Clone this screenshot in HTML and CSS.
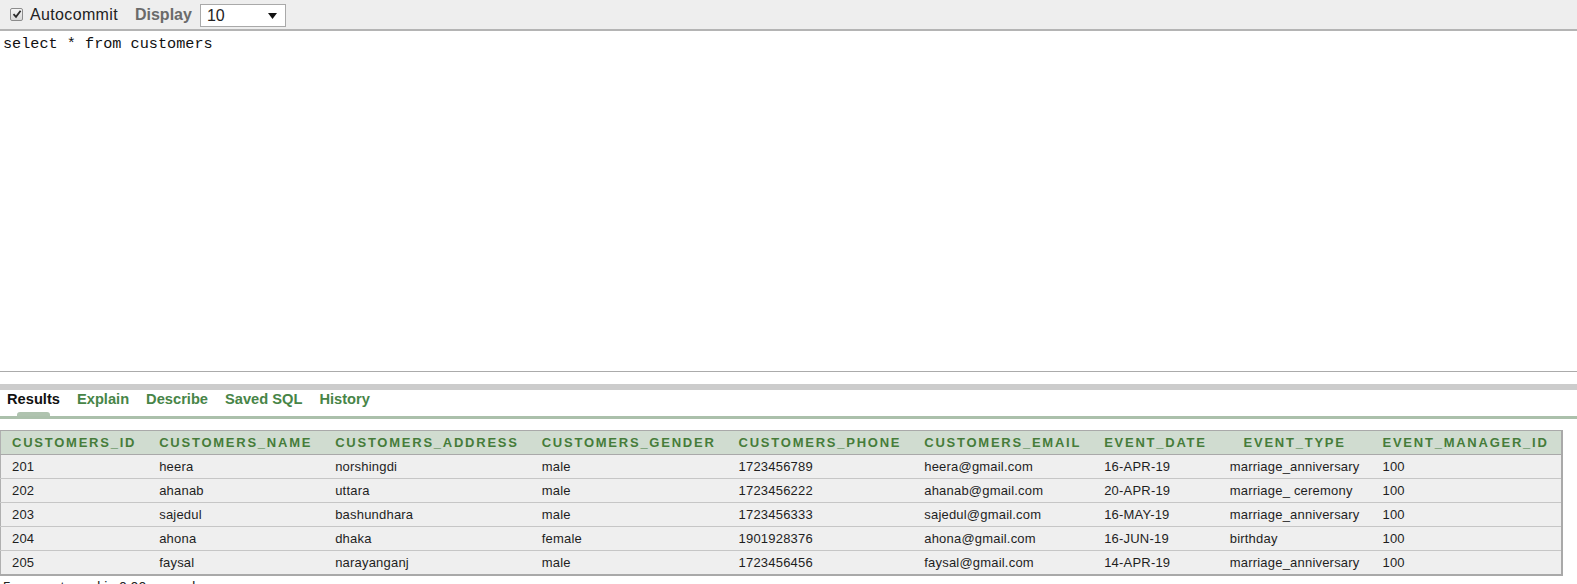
FILE: index.html
```html
<!DOCTYPE html>
<html>
<head>
<meta charset="utf-8">
<title>SQL Commands</title>
<link rel="stylesheet" href="styles.css">
</head>
<body>
<div class="toolbar">
  <span class="check">
    <svg width="10" height="10" viewBox="0 0 10 10"><path d="M1.5 5.2 L4 7.8 L8.6 1.8" fill="none" stroke="#2a2a2a" stroke-width="1.8"/></svg>
  </span>
  <span class="autocommit">Autocommit</span>
  <span class="display-label">Display</span>
  <span class="select">
    <span class="select-value">10</span>
    <svg class="select-arrow" width="9" height="6" viewBox="0 0 9 6"><path d="M0 0 H9 L4.5 6 Z" fill="#111"/></svg>
  </span>
</div>
<div class="editor">select * from customers</div>
<div class="spacer"></div>
<div class="divider"></div>
<div class="tabs">
  <span class="tab active">Results</span>
  <span class="tab">Explain</span>
  <span class="tab">Describe</span>
  <span class="tab">Saved SQL</span>
  <span class="tab">History</span>
</div>
<div class="results">
  <table class="grid">
    <thead>
      <tr>
        <th>CUSTOMERS_ID</th>
        <th>CUSTOMERS_NAME</th>
        <th>CUSTOMERS_ADDRESS</th>
        <th>CUSTOMERS_GENDER</th>
        <th>CUSTOMERS_PHONE</th>
        <th>CUSTOMERS_EMAIL</th>
        <th>EVENT_DATE</th>
        <th>EVENT_TYPE</th>
        <th>EVENT_MANAGER_ID</th>
      </tr>
    </thead>
    <tbody>
      <tr><td>201</td><td>heera</td><td>norshingdi</td><td>male</td><td>1723456789</td><td>heera@gmail.com</td><td>16-APR-19</td><td>marriage_anniversary</td><td>100</td></tr>
      <tr><td>202</td><td>ahanab</td><td>uttara</td><td>male</td><td>1723456222</td><td>ahanab@gmail.com</td><td>20-APR-19</td><td>marriage_ ceremony</td><td>100</td></tr>
      <tr><td>203</td><td>sajedul</td><td>bashundhara</td><td>male</td><td>1723456333</td><td>sajedul@gmail.com</td><td>16-MAY-19</td><td>marriage_anniversary</td><td>100</td></tr>
      <tr><td>204</td><td>ahona</td><td>dhaka</td><td>female</td><td>1901928376</td><td>ahona@gmail.com</td><td>16-JUN-19</td><td>birthday</td><td>100</td></tr>
      <tr><td>205</td><td>faysal</td><td>narayanganj</td><td>male</td><td>1723456456</td><td>faysal@gmail.com</td><td>14-APR-19</td><td>marriage_anniversary</td><td>100</td></tr>
    </tbody>
  </table>
  <div class="status">5 rows returned in 0.00 seconds</div>
</div>
</body>
</html>
```
FILE: styles.css
```css
html, body {
  margin: 0;
  padding: 0;
  background: #ffffff;
}
body {
  font-family: "Liberation Sans", Arial, sans-serif;
  color: #222;
  overflow: hidden;
}
.toolbar {
  height: 29px;
  background: #eeeeee;
  border-bottom: 2px solid #b4b4b4;
  display: flex;
  align-items: center;
  font-size: 16px;
}
.check {
  width: 11px;
  height: 11px;
  margin-left: 10px;
  margin-top: -1px;
  border: 1px solid #8c8c8c;
  border-radius: 2px;
  background: linear-gradient(#f6f6f6, #d8d8d8);
  display: flex;
  align-items: center;
  justify-content: center;
}
.autocommit {
  margin-left: 7px;
  color: #222;
  letter-spacing: 0.35px;
}
.display-label {
  margin-left: 17px;
  font-weight: bold;
  color: #6a6a6a;
}
.select {
  margin-left: 8px;
  width: 84px;
  height: 21px;
  border: 1px solid #a9a9a9;
  background: #fff;
  display: flex;
  align-items: center;
  margin-top: 2px;
}
.select-value {
  margin-left: 6px;
  flex: 1;
}
.select-arrow {
  margin-right: 8px;
}
.editor {
  height: 336px;
  padding: 4px 3px 0 3px;
  font-family: "Liberation Mono", "DejaVu Sans Mono", monospace;
  font-size: 15.2px;
  color: #111;
  border-bottom: 1px solid #ababab;
}
.spacer {
  height: 12px;
}
.divider {
  height: 6px;
  background: #cccccc;
}
.tabs {
  display: flex;
  height: 25px;
  padding-top: 1px;
  border-bottom: 3px solid #abc0ab;
  font-size: 14.67px;
  font-weight: bold;
  padding-left: 7px;
  gap: 17px;
}
.tab {
  position: relative;
  color: #478547;
  line-height: 17px;
}
.tab.active {
  color: #111;
}
.tab.active::after {
  content: "";
  position: absolute;
  left: 10px;
  width: 33px;
  top: 21px;
  height: 4px;
  background: #afc3af;
  border-radius: 3px 3px 0 0;
}
.results {
  padding-top: 11px;
}
.grid {
  border-collapse: collapse;
  border-top: 1px solid #a9a9a9;
  border-left: 1px solid #b0b0b0;
  border-right: 2px solid #a9a9a9;
  border-bottom: 2px solid #a9a9a9;
}
.grid th {
  height: 23px;
  padding: 0 12px 0 11px;
  background: #d0dcd0;
  color: #467c3a;
  font-size: 13px;
  font-weight: bold;
  letter-spacing: 1.76px;
  text-align: center;
  border-bottom: 1px solid #a9a9a9;
  white-space: nowrap;
}
.grid td {
  height: 23px;
  padding: 0 12px 0 11px;
  background: #efefef;
  font-size: 13px;
  letter-spacing: 0.2px;
  color: #1e1e1e;
  text-align: left;
  border-bottom: 1px solid #c6c6c6;
  white-space: nowrap;
}
.status {
  margin-top: 3px;
  padding-left: 3px;
  font-size: 14px;
  color: #222;
}
```
